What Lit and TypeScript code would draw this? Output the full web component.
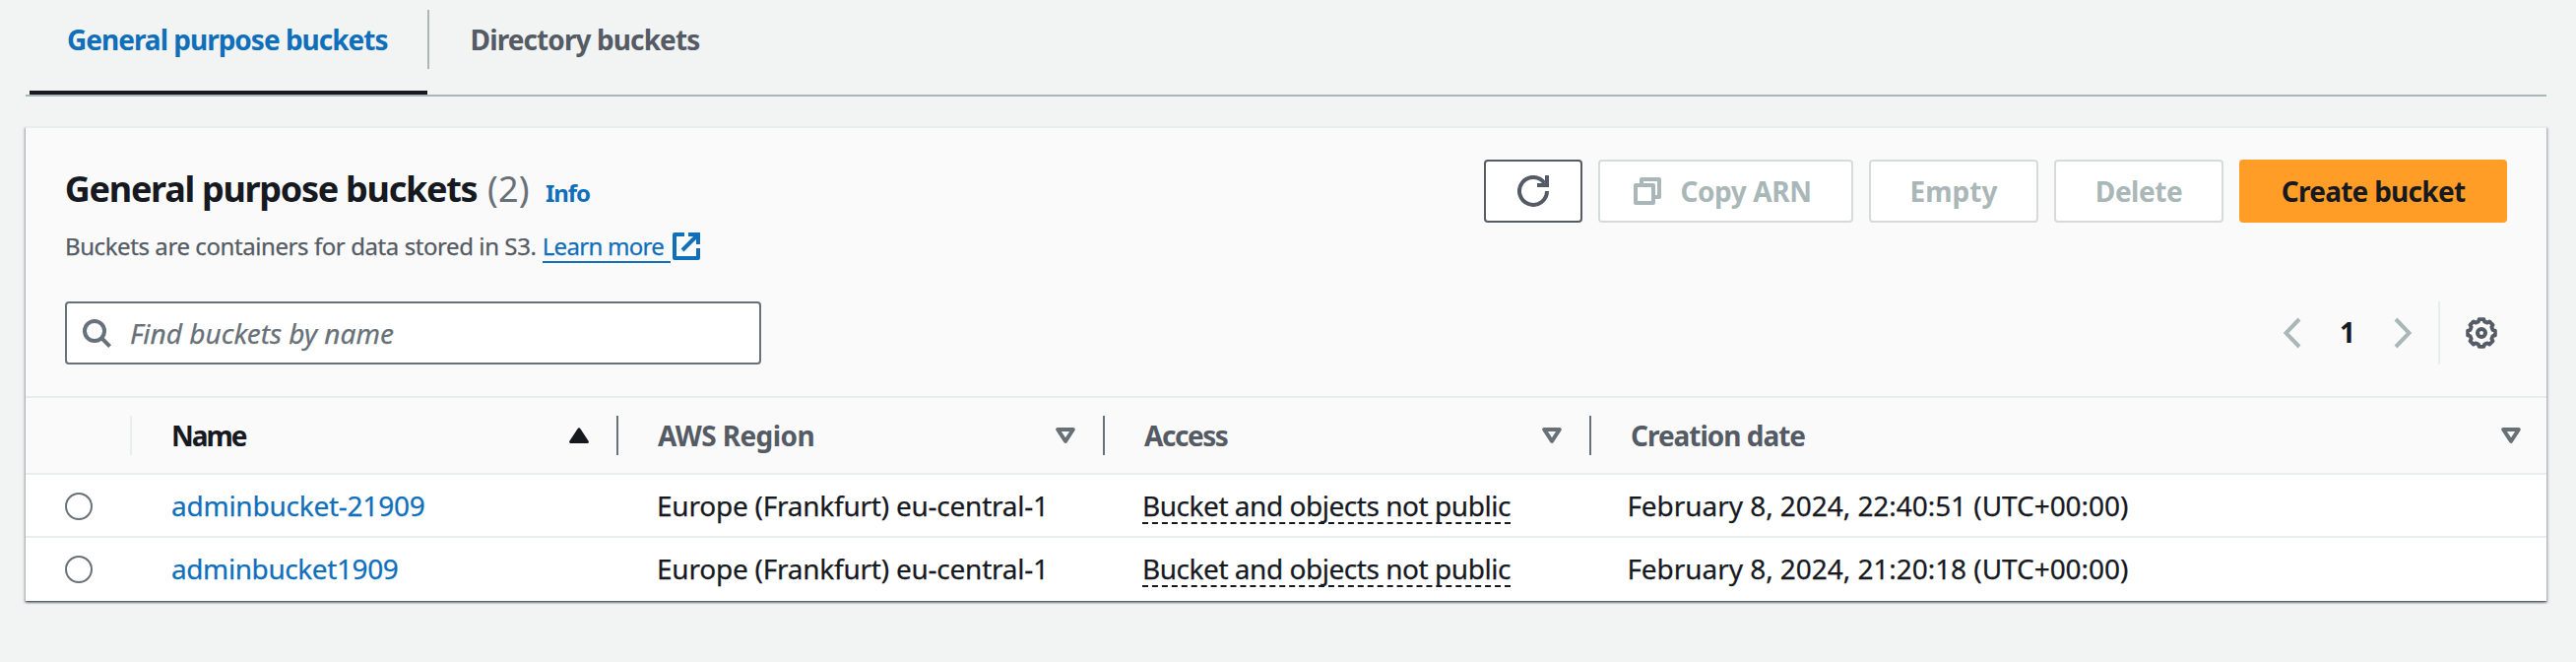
import { LitElement, html, css, svg } from "lit";
import { customElement } from "lit/decorators.js";
import { classMap } from "lit/directives/class-map.js";

const gearPath = (() => {
  const pts: string[] = [];
  const at = (deg: number, r: number) => {
    const a = (deg * Math.PI) / 180;
    return `${(16 + r * Math.cos(a)).toFixed(2)} ${(16 + r * Math.sin(a)).toFixed(2)}`;
  };
  for (let i = 0; i < 8; i++) {
    const d = i * 45;
    pts.push(at(d - 10, 14.1), at(d + 10, 14.1), at(d + 15, 11.9), at(d + 30, 11.9));
  }
  return `M${pts.join("L")}Z`;
})();

const icons = {
  refresh: svg`<path d="M15 8a7 7 0 1 1-1.3-4.1"/><path d="M15 0v5h-5"/>`,
  copy: svg`<g stroke-linejoin="round"><path d="M2 5h9v9H2z"/><path d="M5 5V2h9v9h-3"/></g>`,
  external: svg`<path stroke-linejoin="round" d="M7 2H2v12h12V9"/><path d="M9 2h5v5M14 2L6 10"/>`,
  search: svg`<circle cx="7" cy="7" r="5"/><path d="M10.5 10.5l4.3 4.3"/>`,
};

const icon = (name: keyof typeof icons) =>
  html`<svg class="icon" viewBox="0 0 16 16" fill="none" stroke="currentColor" stroke-width="2">${icons[name]}</svg>`;

const sortAsc = html`<svg class="sort" viewBox="0 0 20 16"><path d="M1.6 14.5h16.8L10 1.8z" fill="currentColor" stroke="currentColor" stroke-width="3" stroke-linejoin="round"/></svg>`;
const sortNone = html`<svg class="sort" viewBox="0 0 20 16"><path d="M2.2 2h15.6L10 13.8z" fill="none" stroke="currentColor" stroke-width="4" stroke-linejoin="round"/></svg>`;
const chevron = (d: string) =>
  html`<svg class="chevron" viewBox="0 0 20 32" fill="none" stroke="currentColor" stroke-width="4"><path d="${d}"/></svg>`;

const columns = [
  { label: "Name", cls: "t-name", sorted: true },
  { label: "AWS Region", cls: "t-region", sorted: false },
  { label: "Access", cls: "t-access", sorted: false },
  { label: "Creation date", cls: "t-created", sorted: false },
];

const buckets = [
  { name: "adminbucket-21909", cls: "n-first", region: "Europe (Frankfurt) eu-central-1", access: "Bucket and objects not public", created: "February 8, 2024, 22:40:51 (UTC+00:00)" },
  { name: "adminbucket1909", cls: "n-second", region: "Europe (Frankfurt) eu-central-1", access: "Bucket and objects not public", created: "February 8, 2024, 21:20:18 (UTC+00:00)" },
];

@customElement("app-root")
export class AppRoot extends LitElement {
  static styles = css`
    :host {
      display: block;
      box-sizing: border-box;
      height: 672px;
      padding: 0 30px 0 26px;
      background: #f2f3f3;
      color: #16191f;
      font: 400 28px/40px "Noto Sans", "Open Sans", sans-serif;
      white-space: nowrap;
    }
    * { box-sizing: border-box; }
    svg { display: block; flex: none; }
    .icon { width: 32px; height: 32px; }
    .tabs {
      display: flex;
      height: 98px;
      padding-left: 4px;
      border-bottom: 2px solid #aab7b8;
      font-weight: 700;
      color: #545b64;
    }
    .tab { display: flex; flex-direction: column; justify-content: space-between; height: 96px; padding-top: 10px; }
    .tab-label { display: flex; align-items: center; height: 60px; }
    .tab.active { width: 406px; color: #0f6fba; }
    .tab.active .tab-label { padding-left: 38px; border-right: 2px solid #aab7b8; letter-spacing: -1px; }
    .tab.active::after { content: ""; width: 404px; height: 4px; background: #16191f; }
    .tab.other .tab-label { padding-left: 41.6px; letter-spacing: -0.9px; }

    .card {
      margin-top: 30px;
      border-top: 2px solid #eaeded;
      background: #fff;
      box-shadow: 0 2px 2px 0 rgba(0, 28, 36, 0.3), 2px 2px 2px 0 rgba(0, 28, 36, 0.15),
        -2px 2px 2px 0 rgba(0, 28, 36, 0.15), 0 1px 1px 0 rgba(0, 28, 36, 0.3);
    }
    .head { background: #fafafa; border-bottom: 2px solid #eaeded; height: 274px; padding: 32px 40px 0; }
    .head-row { display: flex; justify-content: space-between; align-items: flex-start; height: 144px; }
    .title { display: flex; align-items: baseline; padding-top: 5px; height: 72px; line-height: 50px; }
    .title h2 { margin: 0 0 0 -0.2px; width: 429.2px; font-size: 36px; font-weight: 700; letter-spacing: -1.29px; line-height: 50px; }
    .count { width: 59px; font-size: 36px; color: #687078; letter-spacing: 0.15px; }
    .info { font-size: 24px; font-weight: 700; color: #0f6fba; letter-spacing: -1.1px; }
    .desc { display: flex; height: 32px; font-size: 24px; line-height: 32px; color: #545b64; -webkit-text-stroke: 0.25px; }
    .desc span { width: 484.7px; letter-spacing: -0.42px; }
    .learn { display: flex; color: #0f6fba; letter-spacing: -0.7px; }
    .learn b { font-weight: 400; width: 130.3px; height: 33px; border-bottom: 2px solid #0f6fba; }
    .actions { display: flex; gap: 16px; }
    .btn {
      display: flex;
      align-items: center;
      justify-content: center;
      height: 64px;
      border: 2px solid #d5dbdb;
      border-radius: 4px;
      background: #fff;
      color: #aab7b8;
      font-weight: 700;
    }
    .btn span { padding-bottom: 1px; }
    .refresh { width: 100px; border-color: #545b64; color: #545b64; }
    .copy { width: 259px; gap: 17px; padding-right: 8px; letter-spacing: -0.4px; }
    .empty { width: 172px; }
    .delete { width: 172px; letter-spacing: -0.48px; }
    .create { width: 272px; border-color: #ff9d26; background: #ff9d26; color: #16191f; letter-spacing: -0.73px; }

    .tools { display: flex; justify-content: space-between; height: 64px; }
    .search {
      display: flex;
      align-items: center;
      width: 707px;
      padding-left: 14px;
      gap: 18px;
      border: 2px solid #687078;
      border-radius: 4px;
      background: #fff;
      color: #687078;
      font-style: italic;
      -webkit-text-stroke: 0.25px;
    }
    .search span { padding-bottom: 1px; }
    .pager { display: flex; align-items: center; color: #aab7b8; }
    .chevron { width: 20px; height: 32px; }
    .page { width: 92px; padding-bottom: 2px; text-align: center; font-weight: 700; color: #16191f; }
    .prefs { display: flex; align-items: center; height: 64px; width: 70px; margin-left: 26px; padding-left: 26px; border-left: 2px solid #eaeded; color: #545b64; }
    .gear { width: 32px; height: 32px; }

    .columns { display: grid; grid-template-columns: 108px 494px 494px 494px 1fr; align-items: center; height: 78px; background: #fafafa; border-bottom: 2px solid #eaeded; }
    .col { display: flex; align-items: center; justify-content: space-between; height: 40px; padding: 0 28px 0 40px; border-right: 2px solid #687078; font-weight: 700; color: #545b64; }
    .col:first-child { border-color: #eaeded; }
    .col:last-child { border-right: 0; padding-right: 26px; }
    .col.sorted { color: #16191f; }
    .col .sort { color: #687078; }
    .col.sorted .sort { color: #16191f; }
    .sort { width: 20px; height: 16px; }
    .t-name { letter-spacing: -2px; }
    .t-region { letter-spacing: -0.59px; }
    .t-access { letter-spacing: -1.45px; }
    .t-created { letter-spacing: -1.02px; }

    .row { display: grid; grid-template-columns: 108px 493px 493px 492.4px 1fr; align-items: center; height: 64px; -webkit-text-stroke: 0.25px; }
    .row.ruled { background: linear-gradient(#eaeded, #eaeded) bottom / 100% 2px no-repeat; }
    .radio { width: 28px; height: 28px; margin-left: 40px; border: 2px solid #687078; border-radius: 50%; background: #fff; }
    .cell { padding: 0 0 2px 40px; }
    .name { color: #0f6fba; }
    .n-first { letter-spacing: -0.24px; }
    .n-second { letter-spacing: -0.41px; }
    .region { letter-spacing: -0.23px; }
    .created { letter-spacing: -0.05px; }
    .access { display: flex; padding-bottom: 0; letter-spacing: -0.46px; }
    .access span { width: 374px; height: 36px; line-height: 34px; border-bottom: 2px dashed #16191f; }
  `;

  render() {
    return html`
      <nav class="tabs">
        <div class="tab active"><div class="tab-label">General purpose buckets</div></div>
        <div class="tab other"><div class="tab-label">Directory buckets</div></div>
      </nav>
      <section class="card">
        <header class="head">
          <div class="head-row">
            <div>
              <div class="title">
                <h2>General purpose buckets</h2>
                <span class="count">(2)</span>
                <span class="info">Info</span>
              </div>
              <div class="desc">
                <span>Buckets are containers for data stored in S3.</span>
                <a class="learn"><b>Learn more</b>${icon("external")}</a>
              </div>
            </div>
            <div class="actions">
              <div class="btn refresh">${icon("refresh")}</div>
              <div class="btn copy">${icon("copy")}<span>Copy ARN</span></div>
              <div class="btn empty"><span>Empty</span></div>
              <div class="btn delete"><span>Delete</span></div>
              <div class="btn create"><span>Create bucket</span></div>
            </div>
          </div>
          <div class="tools">
            <div class="search">${icon("search")}<span>Find buckets by name</span></div>
            <div class="pager">
              ${chevron("M17 2L3.5 16 17 30")}
              <span class="page">1</span>
              ${chevron("M3 2L16.5 16 3 30")}
              <div class="prefs">
                <svg class="gear" viewBox="0 0 32 32" fill="none" stroke="currentColor" stroke-width="4">
                  <path d="${gearPath}" stroke-width="3.8" stroke-linejoin="round" />
                  <circle cx="16" cy="16" r="4" />
                </svg>
              </div>
            </div>
          </div>
        </header>
        <div class="columns">
          <div class="col"></div>
          ${columns.map(
            (c) => html`<div class=${classMap({ col: true, sorted: c.sorted })}>
              <span class=${c.cls}>${c.label}</span>${c.sorted ? sortAsc : sortNone}
            </div>`
          )}
        </div>
        ${buckets.map(
          (b, i) => html`<div class=${classMap({ row: true, ruled: i < buckets.length - 1 })}>
            <div class="radio"></div>
            <div class="cell name ${b.cls}">${b.name}</div>
            <div class="cell region">${b.region}</div>
            <div class="cell access"><span>${b.access}</span></div>
            <div class="cell created">${b.created}</div>
          </div>`
        )}
      </section>
    `;
  }
}
